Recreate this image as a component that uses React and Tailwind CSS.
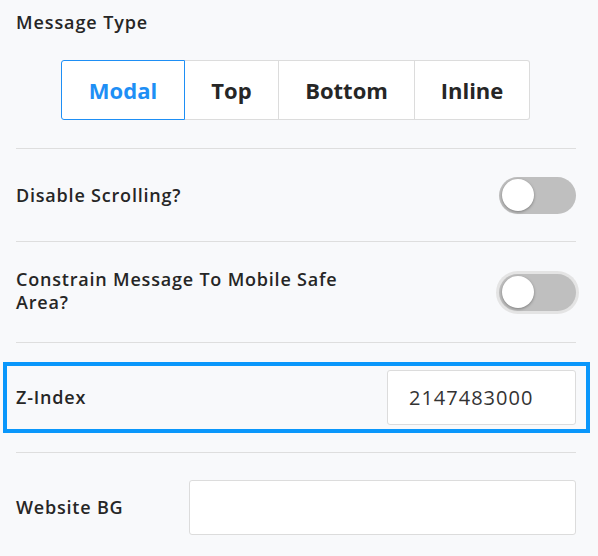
import React from "react";

function Toggle({ focused }) {
  return (
    <div
      className={
        "relative w-[77px] h-[37px] rounded-full bg-[#bfbfbf] shrink-0 " +
        (focused ? "ring-[3px] ring-[#e4e4e4]" : "")
      }
    >
      <div className="absolute left-[3px] top-[2.5px] w-[32px] h-[32px] rounded-full bg-white shadow-[0_1px_3px_rgba(0,0,0,0.35)]" />
    </div>
  );
}

export default function App() {
  const font = { fontFamily: "'Open Sans', Lato, sans-serif" };
  return (
    <div
      className="w-[598px] h-[556px] bg-[#f8f9fb] pl-4 pr-[22px] pt-[10px] text-[#262626] overflow-hidden"
      style={font}
    >
      <div className="text-[18px] font-semibold leading-6 tracking-[0.9px]">Message Type</div>
      <div className="flex pl-[45px] mt-[26px] h-[60px]">
        <button className="w-[124px] h-full border border-[#1e8ff5] rounded-l-[3px] bg-white text-[#1e8ff5] text-[22px] font-bold">
          Modal
        </button>
        <button className="w-[94px] h-full border-y border-r border-[#dcdcdc] bg-white text-[22px] font-bold">
          Top
        </button>
        <button className="w-[136px] h-full border-y border-r border-[#dcdcdc] bg-white text-[22px] font-bold">
          Bottom
        </button>
        <button className="w-[115px] h-full border-y border-r border-[#dcdcdc] rounded-r-[3px] bg-white text-[22px] font-bold">
          Inline
        </button>
      </div>
      <div className="mt-[28px] border-t border-[#dedede]" />
      <div className="h-[92px] flex items-center justify-between">
        <div className="text-[18px] font-semibold tracking-[0.8px]">Disable Scrolling?</div>
        <Toggle />
      </div>
      <div className="border-t border-[#dedede]" />
      <div className="h-[100px] flex items-center justify-between">
        <div className="text-[18px] font-semibold leading-[23px] tracking-[0.8px] w-[350px] -mt-[2px]">
          Constrain Message To Mobile Safe Area?
        </div>
        <Toggle focused />
      </div>
      <div className="border-t border-[#dedede]" />
      <div className="mt-[19px] -ml-[13px] -mr-[14px] h-[71px] border-[4px] border-[#0a97fb] flex items-center justify-between pl-[9px] pr-[10px]">
        <div className="text-[18px] font-semibold tracking-[0.8px]">Z-Index</div>
        <div className="w-[189px] h-[55px] bg-white border border-[#dcdcdc] rounded-[3px] flex items-center pl-[21px] text-[20px] tracking-[1px] text-[#333]">
          2147483000
        </div>
      </div>
      <div className="mt-[19px] border-t border-[#dedede]" />
      <div className="h-[108px] flex items-center justify-between">
        <div className="text-[18px] font-semibold tracking-[0.8px]">Website BG</div>
        <div className="w-[387px] h-[55px] bg-white border border-[#dcdcdc] rounded-[3px]" />
      </div>
    </div>
  );
}
